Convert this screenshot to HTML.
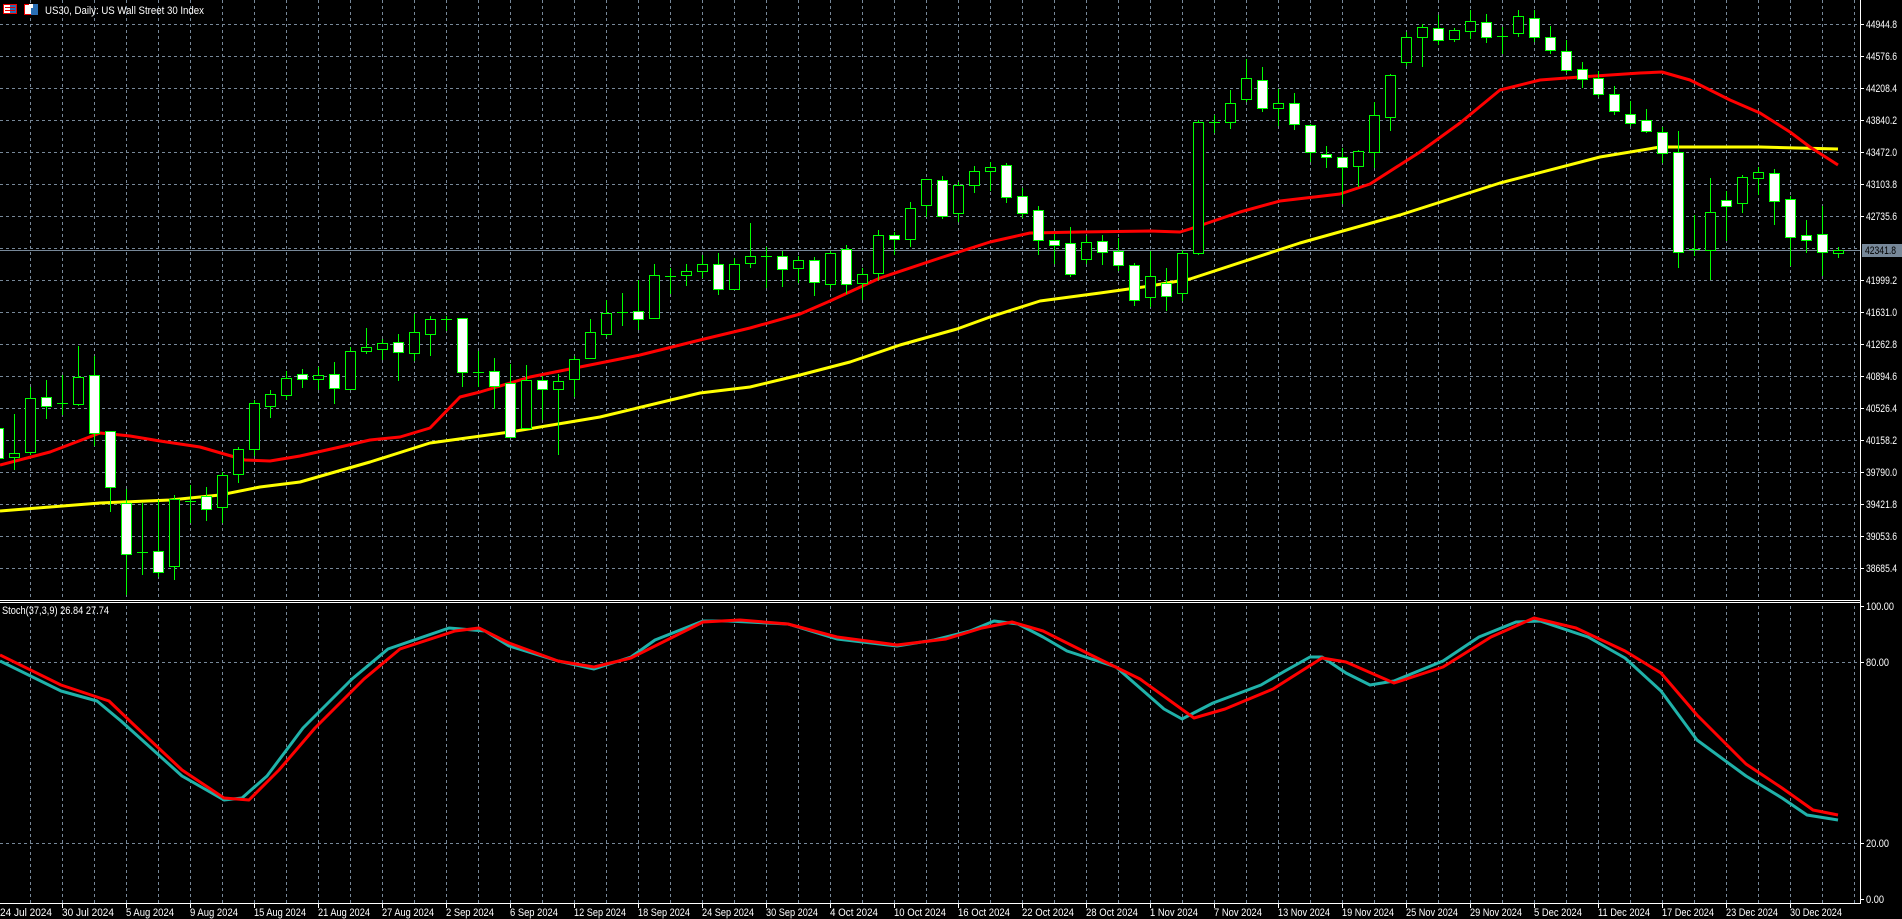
<!DOCTYPE html>
<html><head><meta charset="utf-8">
<style>
html,body{margin:0;padding:0;background:#000;width:1902px;height:919px;overflow:hidden}
svg{display:block}
text{font-family:"Liberation Sans",sans-serif;font-size:11px;fill:#fff}
</style></head>
<body>
<svg id="s" width="1902" height="919" xmlns="http://www.w3.org/2000/svg"></svg>
<script>
const s=document.getElementById('s');let h='';
for(let x=30;x<1860;x+=32)h+=`<line x1="${x+.5}" y1="0" x2="${x+.5}" y2="903" stroke="#778899" stroke-dasharray="3,3"/>`;
for(let y=24;y<=568;y+=32)h+=`<line x1="0" y1="${y+.5}" x2="1860" y2="${y+.5}" stroke="#778899" stroke-dasharray="3,3"/>`;
[662,843].forEach(y=>h+=`<line x1="0" y1="${y+.5}" x2="1860" y2="${y+.5}" stroke="#778899" stroke-dasharray="3,3"/>`);
h+=`<line x1="0" y1="250.5" x2="1860" y2="250.5" stroke="#778899"/>`;
function pl(pts,c,w){return `<polyline fill="none" stroke="${c}" stroke-width="${w}" stroke-linejoin="round" points="${pts.map(p=>p.join(',')).join(' ')}"/>`}
const red=[[0,465],[50,452],[100,433],[130,436],[160,441],[200,447],[245,460],[270,461],[300,456],[340,447],[370,440],[400,437],[430,428],[460,397],[480,392],[510,383],[530,377],[580,367],[640,355],[700,340],[750,328],[800,314],[830,301],[880,278],[940,258],[990,242],[1030,233],[1080,232],[1150,231],[1180,232],[1190,229],[1240,212],[1280,201],[1340,194],[1370,184],[1420,152],[1460,123],[1500,90],[1540,80],[1580,77],[1640,73],[1662,72],[1690,80],[1730,100],[1760,113],[1790,132],[1810,147],[1838,165]];
const yel=[[0,511],[100,503],[170,500],[220,495],[260,487],[300,482],[370,462],[430,443],[510,432],[600,417],[700,393],[750,387],[800,375],[850,362],[900,345],[957,329],[990,317],[1040,301],[1100,293],[1150,286],[1190,279],[1300,243],[1400,215],[1500,183],[1600,157],[1660,147],[1700,147],[1760,147],[1838,149]];
h+=pl(yel,'#ffff00',3)+pl(red,'#ff0000',3);
const C=[[428,458,420,462,'w'],[453,457,414,470,'b'],[398,452,387,455,'b'],[397,406,380,419,'w'],[403,403,375,415,'d'],[377,404,346,406,'b'],[375,433,356,446,'w'],[431,487,431,512,'w'],[503,554,489,595,'w'],[552,552,503,575,'d'],[551,572,500,577,'w'],[499,566,495,580,'b'],[501,501,485,523,'d'],[496,509,487,521,'w'],[475,507,472,523,'b'],[449,474,447,483,'b'],[403,449,400,456,'b'],[394,406,390,418,'b'],[378,395,371,400,'b'],[374,379,369,388,'w'],[375,379,367,390,'b'],[374,388,362,404,'w'],[351,389,347,389,'b'],[347,351,328,354,'b'],[343,349,339,360,'b'],[342,352,334,381,'w'],[332,353,314,361,'b'],[319,334,316,356,'b'],[319,319,316,331,'d'],[318,372,318,387,'w'],[372,372,351,387,'d'],[371,386,358,409,'w'],[383,437,364,437,'w'],[380,428,365,428,'b'],[380,389,376,420,'w'],[381,389,374,455,'b'],[359,379,356,397,'b'],[332,358,319,358,'b'],[313,334,300,337,'b'],[312,312,293,326,'d'],[311,319,280,330,'w'],[275,318,264,319,'b'],[276,276,268,294,'d'],[271,275,264,286,'b'],[264,271,255,278,'b'],[264,289,253,295,'w'],[264,289,258,289,'b'],[256,263,223,268,'b'],[256,256,247,288,'d'],[256,269,251,287,'w'],[260,268,256,283,'b'],[260,282,257,296,'w'],[253,284,251,288,'b'],[249,284,245,294,'w'],[274,283,268,300,'b'],[235,273,230,280,'b'],[235,239,232,255,'w'],[208,239,202,247,'b'],[179,205,179,217,'b'],[180,216,176,219,'w'],[185,213,182,222,'b'],[171,185,166,193,'b'],[167,171,162,191,'b'],[165,197,163,203,'w'],[196,213,188,218,'w'],[210,240,206,255,'w'],[240,245,234,264,'w'],[243,274,227,277,'w'],[242,259,236,264,'b'],[241,252,235,265,'w'],[251,265,238,271,'w'],[265,300,263,306,'w'],[276,297,251,307,'b'],[283,296,268,311,'w'],[253,293,250,301,'b'],[122,253,120,255,'b'],[122,122,115,133,'d'],[103,122,90,129,'b'],[78,99,59,102,'b'],[80,108,67,112,'w'],[103,108,89,126,'b'],[103,124,93,130,'w'],[125,152,124,162,'w'],[154,157,146,168,'w'],[157,167,148,204,'w'],[151,166,150,187,'b'],[115,152,102,168,'b'],[75,117,74,131,'b'],[37,62,32,66,'b'],[27,37,24,67,'b'],[28,40,15,45,'w'],[30,39,28,42,'b'],[21,31,10,39,'b'],[22,37,14,43,'w'],[36,36,27,54,'d'],[16,33,10,37,'b'],[18,37,10,42,'w'],[37,50,26,54,'w'],[51,70,40,73,'w'],[69,79,62,88,'w'],[78,94,71,97,'w'],[94,111,86,115,'w'],[114,123,101,126,'w'],[120,131,109,133,'w'],[132,153,127,163,'w'],[152,252,131,268,'w'],[249,249,215,256,'d'],[212,250,178,280,'b'],[200,206,191,241,'w'],[177,203,175,213,'b'],[172,178,167,195,'b'],[173,201,169,225,'w'],[199,237,196,266,'w'],[235,240,220,253,'w'],[234,252,206,276,'w'],[250,253,247,258,'b']];
C.forEach((c,k)=>{const x=-2+16*k;const[t,b,hi,lo,ty]=c;
h+=`<line x1="${x+.5}" y1="${hi}" x2="${x+.5}" y2="${lo}" stroke="#00ff00"/>`;
if(ty=='d')h+=`<line x1="${x-5}" y1="${t+.5}" x2="${x+6}" y2="${t+.5}" stroke="#00ff00"/>`;
else h+=`<rect x="${x-4.5}" y="${t+.5}" width="10" height="${Math.max(b-t,2)}" fill="${ty=='w'?'#fff':'#000'}" stroke="#00ff00"/>`;});
h+=`<rect x="0" y="598" width="1860" height="5" fill="#000"/><line x1="0" y1="600.5" x2="1861" y2="600.5" stroke="#fff"/><line x1="0" y1="602.5" x2="1861" y2="602.5" stroke="#fff"/>`;
h+=`<line x1="1860.5" y1="0" x2="1860.5" y2="904" stroke="#fff"/><line x1="0" y1="903.5" x2="1861" y2="903.5" stroke="#fff"/>`;
const sc=1.2125;
const tm=[[0,545],[50,570],[80,578],[100,595],[150,640],[185,660],[200,658],[220,640],[250,600],[290,560],[320,535],[370,518],[400,520],[420,533],[460,545],[490,552],[520,542],[540,528],[580,512],[600,512],[650,515],[690,527],[740,533],[770,528],[800,520],[820,512],[840,515],[860,525],[880,537],[920,550],[960,585],[975,593],[1000,580],[1040,565],[1060,553],[1080,542],[1090,542],[1110,555],[1130,565],[1150,562],[1190,545],[1220,525],[1250,513],[1270,512],[1310,525],[1340,543],[1370,570],[1400,610],[1440,640],[1470,658],[1490,672],[1516,676]];
const rs=[[0,540],[50,565],[90,578],[110,597],[150,635],[185,658],[205,660],[230,635],[260,600],[300,560],[330,535],[375,520],[395,518],[420,530],[460,545],[490,550],[520,543],[545,530],[580,513],[610,511],[650,515],[690,525],[740,532],[780,527],[810,518],[835,513],[860,520],[900,540],[940,560],[985,592],[1010,585],[1050,568],[1090,543],[1110,546],[1150,563],[1190,550],[1230,525],[1265,510],[1300,518],[1340,537],[1370,555],[1400,590],[1440,630],[1470,650],[1495,668],[1516,672]];
const f=a=>a.map(p=>[Math.round(p[0]*sc),Math.round(p[1]*sc)]);
h+=pl(f(tm),'#20b2aa',3)+pl(f(rs),'#ff0000',3);
const T=(x,y,t,w,st)=>`<text x="${x}" y="${y}" textLength="${w}" lengthAdjust="spacingAndGlyphs"${st||''}>${t}</text>`;
const pr=['44944.8','44576.6','44208.4','43840.2','43472.0','43103.8','42735.6','','41999.2','41631.0','41262.8','40894.6','40526.4','40158.2','39790.0','39421.8','39053.6','38685.4'];
pr.forEach((p,i)=>{const y=24+32*i;if(!p)return;h+=`<line x1="1860" y1="${y+.5}" x2="1864" y2="${y+.5}" stroke="#fff"/>`+T(1866,y+4,p,31);});
h+=`<rect x="1862" y="244" width="40" height="13" fill="#778899"/>`+T(1865,254,'42341.8',31,' style="fill:#000"');
[[606,'100.00',28],[662,'80.00',23],[843,'20.00',23],[899,'0.00',18]].forEach(([y,t,w])=>h+=`<line x1="1860" y1="${y+.5}" x2="1864" y2="${y+.5}" stroke="#fff"/>`+T(1866,y+4,t,w));
const d=['24 Jul 2024','30 Jul 2024','5 Aug 2024','9 Aug 2024','15 Aug 2024','21 Aug 2024','27 Aug 2024','2 Sep 2024','6 Sep 2024','12 Sep 2024','18 Sep 2024','24 Sep 2024','30 Sep 2024','4 Oct 2024','10 Oct 2024','16 Oct 2024','22 Oct 2024','28 Oct 2024','1 Nov 2024','7 Nov 2024','13 Nov 2024','19 Nov 2024','25 Nov 2024','29 Nov 2024','5 Dec 2024','11 Dec 2024','17 Dec 2024','23 Dec 2024','30 Dec 2024'];
d.forEach((t,j)=>{const x=-2+64*j;h+=`<line x1="${x+.5}" y1="903" x2="${x+.5}" y2="908" stroke="#fff"/>`+T(Math.max(x,0),916,t,Math.round(t.length*4.75));});
h+=`<rect x="3.5" y="4.5" width="13" height="9" fill="#fff" stroke="#e00"/><rect x="10" y="5" width="6" height="8" fill="#2a6fb5"/><line x1="5" y1="7.5" x2="15" y2="7.5" stroke="#e00"/><line x1="5" y1="10.5" x2="15" y2="10.5" stroke="#e00"/>`;
h+=`<rect x="24.5" y="4.5" width="13" height="10" fill="#fff" stroke="#e00"/><rect x="31" y="4" width="7" height="11" fill="#2a6fb5"/><rect x="29" y="4" width="4" height="4" fill="#fff"/>`;
h+=T(45,14,'US30, Daily:  US Wall Street 30 Index',159);
h+=T(2,614,'Stoch(37,3,9) 26.84 27.74',107);
s.innerHTML=h;
</script>
</body></html>
